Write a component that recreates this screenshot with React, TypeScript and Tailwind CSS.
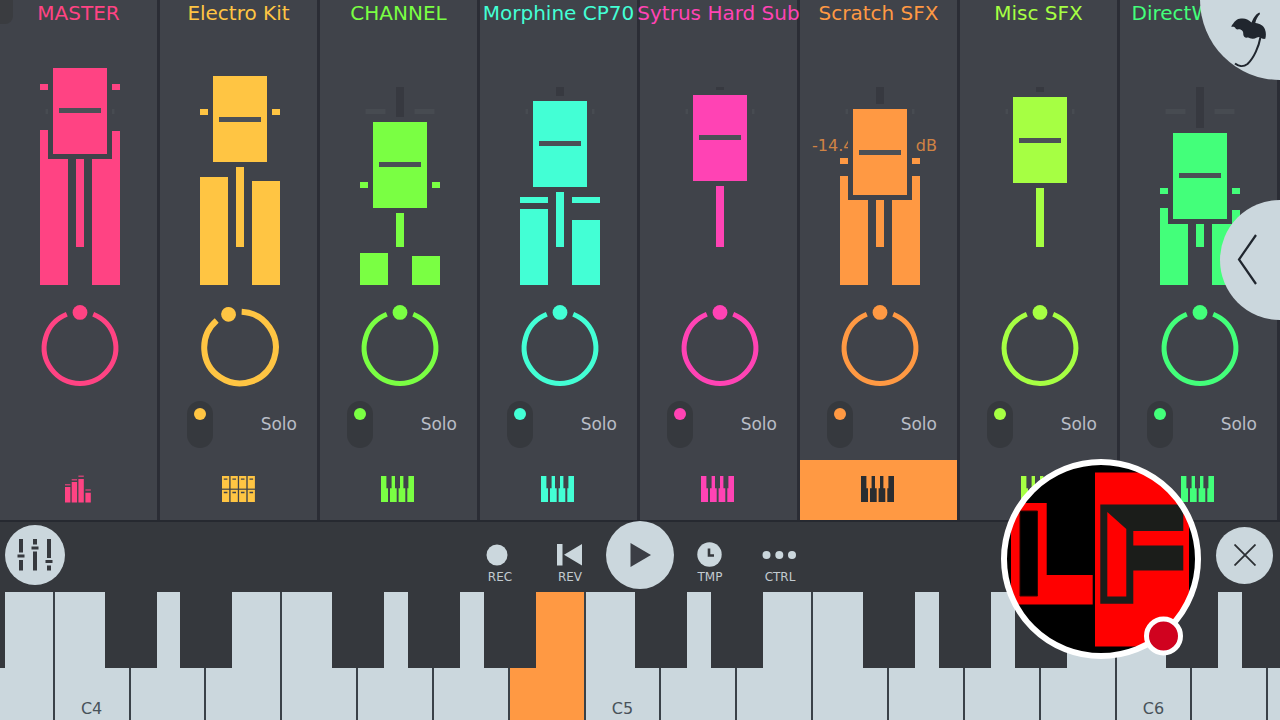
import { useState } from 'react';
import clsx from 'clsx';

interface Channel {
  name: string;
  color: string;
  kind: 'master' | 'drums' | 'keys';
  // distance of the fader cap from the top of its travel
  fader: number;
  pan: number;
  level?: [number, number];
  peak?: number;
  readout?: string;
}

const channels: Channel[] = [
  { name: 'MASTER', color: 'text-[#ff4383]', kind: 'master', fader: 3, pan: 0, level: [155, 154], peak: 201 },
  { name: 'Electro Kit', color: 'text-[#ffc543]', kind: 'drums', fader: 11, pan: -19, level: [108, 104], peak: 176 },
  { name: 'CHANNEL', color: 'text-[#7aff43]', kind: 'keys', fader: 57, pan: 0, level: [32, 29], peak: 103 },
  { name: 'Morphine CP70', color: 'text-[#43ffd5]', kind: 'keys', fader: 36, pan: 0, level: [76, 65], peak: 88 },
  { name: 'Sytrus Hard Sub', color: 'text-[#ff43b4]', kind: 'keys', fader: 30, pan: 0 },
  { name: 'Scratch SFX', color: 'text-[#ff9943]', kind: 'keys', fader: 44, pan: 0, level: [109, 109], peak: 127, readout: '-14.4' },
  { name: 'Misc SFX', color: 'text-[#a6ff43]', kind: 'keys', fader: 32, pan: 0 },
  { name: 'DirectWave 1', color: 'text-[#43ff7a]', kind: 'keys', fader: 68, pan: 0, level: [77, 75], peak: 97 },
];

const FADER_MAX = 134;

// white keys from A3 to E6
const keys = [
  'A3', 'B3', 'C4', 'D4', 'E4', 'F4', 'G4', 'A4', 'B4', 'C5',
  'D5', 'E5', 'F5', 'G5', 'A5', 'B5', 'C6', 'D6', 'E6',
];

function Fader({ channel }: { channel: Channel }) {
  const [value, setValue] = useState(channel.fader);
  const { level, peak } = channel;

  return (
    <div className="relative h-[220px] w-20">
      <svg viewBox="0 0 80 220" className="h-full w-full" fill="currentColor" aria-hidden="true">
        <path d="M5.5 44h20v5h-20zM54.5 44h20v5h-20z" fill="#474b51" />
        <rect x="36" y="22" width="8" height="160" fill="#373940" />
        {level && (
          <>
            <rect x="0" y={220 - level[0]} width="28" height={level[0]} />
            <rect x="52" y={220 - level[1]} width="28" height={level[1]} />
          </>
        )}
        {peak && (
          <>
            <rect x="0" y={220 - peak} width="28" height="6" />
            <rect x="52" y={220 - peak} width="28" height="6" />
          </>
        )}
        <rect x="36" y={value + 80} width="8" height={Math.max(0, 102 - value)} />
      </svg>
      <input
        type="range"
        min={0}
        max={FADER_MAX}
        value={value}
        onChange={(e) => setValue(Number(e.target.value))}
        aria-label={`${channel.name} volume`}
        className="absolute top-0 left-[13px] m-0 h-[220px] w-[54px] cursor-pointer appearance-none bg-transparent [writing-mode:vertical-lr] [&::-webkit-slider-thumb]:h-[86px] [&::-webkit-slider-thumb]:w-[54px] [&::-webkit-slider-thumb]:appearance-none [&::-webkit-slider-thumb]:bg-current [&::-webkit-slider-thumb]:bg-[linear-gradient(#4b5056,#4b5056)] [&::-webkit-slider-thumb]:bg-[length:42px_5px] [&::-webkit-slider-thumb]:bg-center [&::-webkit-slider-thumb]:bg-no-repeat [&::-webkit-slider-thumb]:shadow-[0_0_0_5px_#40434a]"
      />
    </div>
  );
}

function PanKnob({ channel }: { channel: Channel }) {
  const [pan, setPan] = useState(channel.pan);

  return (
    <div className="relative mt-[22px] size-20">
      <svg viewBox="0 0 80 80" className="size-full overflow-visible" aria-hidden="true">
        <g transform={`rotate(${pan} 40 40.5)`}>
          <path
            d="M53.2 7.3A35.8 35.8 0 1 1 26.8 7.3"
            fill="none"
            stroke="currentColor"
            strokeWidth={pan === 0 ? 5 : 6}
          />
          <circle cx="40" cy="5.4" r="7.4" fill="currentColor" />
        </g>
      </svg>
      <input
        type="range"
        min={-150}
        max={150}
        value={pan}
        onChange={(e) => setPan(Number(e.target.value))}
        aria-label={`${channel.name} pan`}
        className="absolute inset-0 m-0 size-full cursor-pointer opacity-0"
      />
    </div>
  );
}

function ChannelIcon({ kind }: { kind: Channel['kind'] }) {
  if (kind === 'master') {
    return (
      <svg width="26" height="28" viewBox="0 0 26 28" fill="currentColor" aria-hidden="true">
        <path d="M0 12h5.4v15.5H0zM6.7 7h5.4v20.5H6.7zM13.4 4h5.4v23.5h-5.4zM20.4 17.8h5.4v9.7h-5.4z" />
        <path
          d="M0 9h5.4v1.5H0zM6.7 4h5.4v1.5H6.7zM13.4 .5h5.4V2h-5.4zM20.4 14.2h5.4v1.5h-5.4z"
          opacity=".7"
        />
      </svg>
    );
  }
  if (kind === 'drums') {
    return (
      <svg width="35" height="26" viewBox="-2 0 35 26" fill="currentColor" aria-hidden="true">
        {[0, 8.6, 17.1, 25.7].map((x) => (
          <g key={x}>
            <rect x={x} y="0" width="7.2" height="12.6" />
            <rect x={x} y="13.8" width="7.2" height="12.2" />
            <path d={`M${x + 1.8} 2.4h3.6v1.4h-3.6zM${x + 1.8} 15.8h3.6v1.4h-3.6z`} fill="#40434a" />
          </g>
        ))}
      </svg>
    );
  }
  return (
    <svg width="33" height="26" viewBox="0 0 33 26" fill="currentColor" aria-hidden="true">
      <path d="M0 0h5.4v12.3H7V26H0zM10.6 0H14v12.3h1.7V26H9V12.3h1.6zM19 0h3.4v12.3h1.9V26h-6.7V12.3H19zM27.4 0H33v26h-6.7V12.3h1.1z" />
    </svg>
  );
}

function ChannelStrip({
  channel,
  selected,
  onSelect,
}: {
  channel: Channel;
  selected: boolean;
  onSelect: () => void;
}) {
  return (
    <section
      className={clsx(
        'relative flex min-w-0 flex-1 flex-col border-r-[3px] border-[#2b2d35]',
        channel.color,
      )}
    >
      <h2 className="flex h-[26px] items-center justify-center text-xl leading-[26px] whitespace-nowrap">
        {channel.name}
      </h2>

      {channel.readout && (
        <div className="absolute top-[136px] right-5 left-3 flex justify-between text-base leading-5 opacity-75">
          <span>{channel.readout}</span>
          <span>dB</span>
        </div>
      )}

      <div className="mt-[39px] flex flex-col items-center pl-[3px]">
        <Fader channel={channel} />
        <PanKnob channel={channel} />
      </div>

      {channel.kind !== 'master' && (
        <div className="mt-[14px] flex items-center justify-between pr-5 pl-[27px]">
          <input
            type="checkbox"
            aria-label={`${channel.name} on`}
            defaultChecked
            className="relative h-[47px] w-[26px] appearance-none rounded-full bg-[#36393e] before:absolute before:top-8 before:left-[7px] before:size-3 before:rounded-full before:bg-current checked:before:top-[7px]"
          />
          <button type="button" className="pb-0.5 text-[17px] leading-5 text-[#b9bdc6]">
            Solo
          </button>
        </div>
      )}

      <button
        type="button"
        onClick={onSelect}
        aria-label={`Select ${channel.name}`}
        className={clsx(
          'mt-auto flex h-[60px] items-center justify-center pr-0.5 pb-0.5',
          selected && 'bg-[#ff9943] text-[#2b2d30]',
        )}
      >
        <ChannelIcon kind={channel.kind} />
      </button>
    </section>
  );
}

function Transport() {
  const item =
    'flex h-16 w-[70px] flex-col items-center gap-px pt-[19px] text-xs leading-4 text-[#c3cbd1]';

  return (
    <div className="flex items-center">
      <button type="button" className={item}>
        <svg width="26" height="26" viewBox="0 0 26 26" fill="#cbd7dd" className="overflow-visible" aria-hidden="true">
          <circle cx="10" cy="13" r="10.5" />
        </svg>
        REC
      </button>
      <button type="button" className={item}>
        <svg width="26" height="26" viewBox="0 0 26 26" fill="#cbd7dd" aria-hidden="true">
          <path d="M0 2h5.5v21.5H0zM25 2v21.5L7 12.7z" />
        </svg>
        REV
      </button>
      <div className="flex h-16 w-[70px] items-center justify-center">
        <button
          type="button"
          aria-label="Play"
          className="flex size-[68px] shrink-0 items-center justify-center rounded-full bg-[#cbd7dd]"
        >
          <svg width="22" height="24" viewBox="0 0 22 24" fill="#3b3e45" aria-hidden="true">
            <path d="M1.5 0v24L22 12z" />
          </svg>
        </button>
      </div>
      <button type="button" className={item}>
        <svg width="26" height="26" viewBox="0 0 26 26" aria-hidden="true">
          <circle cx="12.5" cy="12.5" r="12.2" fill="#cbd7dd" />
          <path d="M12 6.5v7h5" fill="none" stroke="#36393e" strokeWidth="2.6" />
        </svg>
        TMP
      </button>
      <button type="button" className={item}>
        <svg width="34" height="26" viewBox="0 0 34 26" fill="#cbd7dd" className="overflow-visible" aria-hidden="true">
          <circle cx="3.5" cy="13" r="4" />
          <circle cx="16.3" cy="13" r="4" />
          <circle cx="29" cy="13" r="4" />
        </svg>
        CTRL
      </button>
    </div>
  );
}

function Keyboard() {
  return (
    <div className="flex min-h-32 flex-1 overflow-hidden bg-[#35383d]">
      <div className="-mr-16 -ml-[97px] flex flex-1">
        {keys.map((note) => {
          const hasSharp = !/[BE]/.test(note);
          return (
            <div key={note} className="relative flex flex-1 border-r-2 border-[#3a4148]">
              <button
                type="button"
                aria-label={note}
                className={clsx(
                  'flex flex-1 items-end justify-center pb-px text-base leading-5 text-[#48525a]',
                  note === 'B4' ? 'bg-[#ff9943]' : 'bg-[#cbd7dd]',
                )}
              >
                {note.startsWith('C') && note}
              </button>
              {hasSharp && (
                <button
                  type="button"
                  aria-label={`${note[0]}#${note[1]}`}
                  className="absolute top-0 -right-7 z-10 h-[76px] w-[52px] bg-[#35383d]"
                />
              )}
            </div>
          );
        })}
      </div>
    </div>
  );
}

function RecorderBubble() {
  return (
    <button
      type="button"
      aria-label="Screen recorder"
      className="absolute top-[459px] right-[79px] z-20 size-[200px] rounded-full"
    >
      <svg viewBox="0 0 200 200" className="size-full" aria-hidden="true">
        <defs>
          <clipPath id="bubble">
            <circle cx="100" cy="100" r="95" />
          </clipPath>
        </defs>
        <g clipPath="url(#bubble)">
          <rect width="200" height="200" fill="#000" />
          <path d="M94 13.5h94v174H94z" fill="#ff0000" />
          <path d="M10 44h35.7v72h46v29.5H10z" fill="#ff0000" />
          <path d="M19 52h17.5v85H19z" fill="#000" stroke="#330400" />
          <path d="M99.3 45.5h83V72h-50v14.5h50v25h-50v33.3h-33z" fill="#1b1d1a" />
          <path d="M106.3 53l19 17v67.5h-19z" fill="#ff0000" />
        </g>
        <circle cx="100" cy="100" r="97" fill="none" stroke="#fff" strokeWidth="6" />
        <circle cx="162.5" cy="177" r="17" fill="#d0021f" stroke="#fff" strokeWidth="5" />
      </svg>
    </button>
  );
}

export default function App() {
  const [selected, setSelected] = useState(5);

  return (
    <div className="relative flex min-h-screen flex-col overflow-hidden bg-[#40434a] font-['DejaVu_Sans',sans-serif]">
      <div className="absolute top-0 left-0 h-6 w-[13px] rounded-br-lg bg-[#3a3c40]" />

      <main className="flex h-[520px]">
        {channels.map((channel, i) => (
          <ChannelStrip
            key={channel.name}
            channel={channel}
            selected={i === selected}
            onSelect={() => setSelected(i)}
          />
        ))}
      </main>

      {/* Toolbar */}
      <div className="grid h-[72px] grid-cols-[1fr_auto_1fr] items-center border-t-2 border-[#262930] bg-[#35383d] px-[5px] pb-1">
        <button
          type="button"
          aria-label="Mixer"
          className="flex size-[60px] items-center justify-center rounded-full bg-[#cbd7dd]"
        >
          <svg width="36" height="32" viewBox="0 0 36 32" fill="#36393e" aria-hidden="true">
            <path d="M2 0h4v13.5H2zM2 21h4v10.5H2zM.5 15.5h7v3h-7z" />
            <path d="M16 0h4v5.5h-4zM16 12.5h4v19h-4zM14.500 7.500h7v3h-7z" />
            <path d="M30 0h4v19h-4zM30 26.500h4v5h-4zM28.500 21h7v3h-7z" />
          </svg>
        </button>
        <Transport />
        <button
          type="button"
          aria-label="Close keyboard"
          className="mr-0.5 flex size-[57px] items-center justify-center justify-self-end rounded-full bg-[#cbd7dd]"
        >
          <svg width="22" height="22" viewBox="0 0 22 22" aria-hidden="true">
            <path d="M.5 .5l21 21M21.5 .5l-21 21" stroke="#2b2f33" strokeWidth="1.8" />
          </svg>
        </button>
      </div>

      <Keyboard />

      {/* Main menu */}
      <button
        type="button"
        aria-label="Menu"
        className="absolute -top-20 -right-20 size-40 rounded-full bg-[#cbd7dd]"
      >
        <svg viewBox="0 0 80 80" className="absolute bottom-0 left-0 size-20" aria-hidden="true">
          <path
            d="M31.500 26C34 22 37 18.500 41 18.500C45 18 48 19 51.500 22.500C54 16.500 56.500 13.500 59.500 12.500L60 14C57.500 16.500 56 19.500 55.300 23C60 23.500 63.500 25.500 65 29.500C66.300 33 66 36 65.300 38.800C63.500 39.300 61.500 38.500 60 37C57.500 36.500 56 38.500 53 38.800C50.500 39 49.500 37.500 48 37.500C45 38 43.500 37 43.300 34.500C43.500 32 42.500 30 40.500 29.500C38.500 29 37.500 30 36 29C35 26.500 33 26.500 31.500 27z"
            fill="#20262e"
          />
          <path
            d="M60.500 37C59 46 54 58 47.500 64C43 67.300 38 66 35 63.500"
            fill="none"
            stroke="#20262e"
            strokeWidth="2"
          />
        </svg>
      </button>
      <button
        type="button"
        aria-label="Open side panel"
        className="absolute top-[200px] -right-[60px] size-[120px] rounded-full bg-[#cbd7dd]"
      >
        <svg viewBox="0 0 60 120" className="absolute top-0 left-0 h-[120px] w-[60px]" aria-hidden="true">
          <path d="M36 35L19 59.500L36 84" fill="none" stroke="#20262e" strokeWidth="2.2" />
        </svg>
      </button>

      <RecorderBubble />
    </div>
  );
}
